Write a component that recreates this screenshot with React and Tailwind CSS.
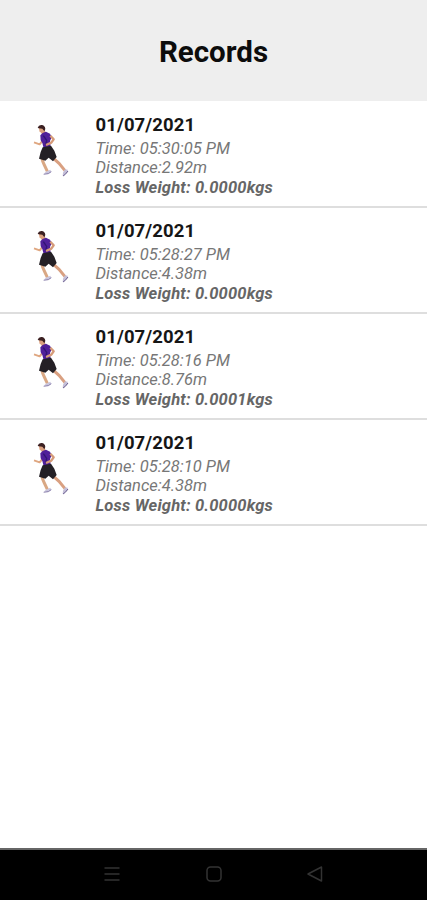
const records = [
  { time: '05:30:05 PM', distance: '2.92m', loss: '0.0000kgs' },
  { time: '05:28:27 PM', distance: '4.38m', loss: '0.0000kgs' },
  { time: '05:28:16 PM', distance: '8.76m', loss: '0.0001kgs' },
  { time: '05:28:10 PM', distance: '4.38m', loss: '0.0000kgs' },
];

function Runner() {
  return (
    <svg viewBox="0 0 210 240" className="h-20 w-[70px] shrink-0" fill="none">
      <path d="M66 140 C65 149 69 157 73 165 L82 184" stroke="#d9a884" strokeWidth="9" />
      <path d="M98 143 L117 160 L135 182" stroke="#d9a081" strokeWidth="9" />
      <path d="M71 191 L78 185 L91 179 L94 186 L83 192 Z" fill="#c9c5dc" />
      <path d="M71 193 L85 191 L94 185" stroke="#62558f" strokeWidth="2" />
      <path d="M128 197 L129 188 L135 178 L143 179 L143 186 L133 196 Z" fill="#c4bfd8" />
      <path d="M129 198 L136 193 L144 183" stroke="#54467e" strokeWidth="2.5" />
      <path d="M68 92 L59 103 L42 97" stroke="#dfa781" strokeWidth="6" strokeLinejoin="round" />
      <path d="M62 62 L75 61 L77 71 L66 74 Z" fill="#c98e70" />
      <path d="M56 52 L74 52 L74 65 L67 69 L59 66 Z" fill="#dba17f" />
      <path d="M53 53 Q56 44 65 45 Q75 46 76 57 L73 64 L67 56 L56 55 Z" fill="#3b2022" />
      <path d="M61 76 L68 69 L78 65 L90 71 L95 82 L90 93 L92 110 L71 115 L67 99 L62 91 Z" fill="#50209a" />
      <path d="M70 77 L80 91 L77 105" stroke="#321574" strokeWidth="4" />
      <path d="M91 77 L101 88 L94 98 L78 105" stroke="#d59a78" strokeWidth="7" strokeLinejoin="round" />
      <path d="M68 112 L93 107 L103 122 L110 141 L99 154 L86 143 L76 152 L57 146 L62 126 Z" fill="#242025" />
    </svg>
  );
}

function RecordRow({ time, distance, loss }) {
  return (
    <li className="flex h-[106px] border-b-2 border-[#dedede] pl-5 pt-2">
      <Runner />
      <div className="ml-[5.5px] mt-[4px] whitespace-nowrap text-[#777]">
        <h2 className="h-[25px] text-[18.5px] leading-[22px] font-bold tracking-[0.1px] text-[#161616]">01/07/2021</h2>
        <p className="h-[19px] text-[16.5px] leading-5 italic tracking-[0.03px]">Time: {time}</p>
        <p className="h-5 text-[16.5px] leading-[19px] italic">Distance:{distance}</p>
        <p className="h-5 text-[16.5px] leading-5 font-bold italic tracking-[0.19px] text-[#666]">Loss Weight: {loss}</p>
      </div>
    </li>
  );
}

export default function App() {
  return (
    <div className="flex h-[900px] w-[427px] flex-col overflow-hidden bg-white font-[Roboto,sans-serif]">
      <header className="flex h-[101px] shrink-0 items-center justify-center bg-[#eee] pt-[3px]">
        <h1 className="text-[29.5px] leading-9 font-bold text-[#0c0c0c]">Records</h1>
      </header>
      <main className="grow pt-px">
        <ul>
          {records.map((record) => (
            <RecordRow key={record.time} {...record} />
          ))}
        </ul>
      </main>
      <nav className="flex h-[52px] shrink-0 items-center justify-between border-t-2 border-[#666] bg-black px-[103px] pb-0.5 text-[#333]">
        <svg width="18" height="18" viewBox="0 0 18 18" stroke="currentColor" strokeWidth="1.5" fill="none">
          <path d="M1.5 3h15M1.5 9h15M1.5 15h15" />
        </svg>
        <svg width="18" height="18" viewBox="0 0 18 18" stroke="currentColor" strokeWidth="1.5" fill="none">
          <rect x="2" y="2" width="14" height="14" rx="3.5" />
        </svg>
        <svg width="18" height="18" viewBox="0 0 18 18" stroke="currentColor" strokeWidth="1.5" fill="none" strokeLinejoin="round">
          <path d="M15.5 2v14L2 9Z" />
        </svg>
      </nav>
    </div>
  );
}
